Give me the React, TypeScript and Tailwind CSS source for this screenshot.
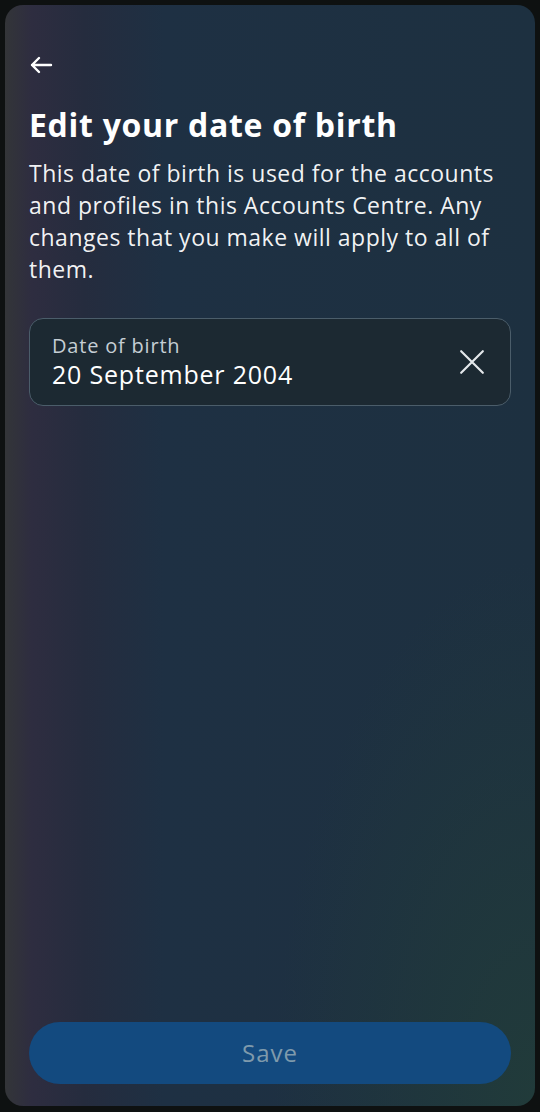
export default function App() {
  return (
    <div className="min-h-screen bg-[#0e1111] p-[5px]" style={{ fontFamily: "'Open Sans', 'Noto Sans', sans-serif" }}>
      <div className="h-[1101px] rounded-[18px] overflow-hidden flex flex-col bg-[radial-gradient(ellipse_at_100%_100%,#213b3a_0%,transparent_35%),linear-gradient(90deg,#333538_0%,#2e2d40_5%,#252c3e_15%,#1e3043_30%,#1d3040_100%)] px-[24px]">
        <button className="mt-[48px] w-[24px] h-[24px] text-white">
          <svg viewBox="0 0 24 24" className="w-[24px] h-[24px]" fill="none" stroke="currentColor" strokeWidth="2.4" strokeLinecap="round" strokeLinejoin="round">
            <path d="M22 12H3M10 5l-7 7 7 7" />
          </svg>
        </button>
        <h1 className="mt-[28px] text-[32px] leading-[40px] font-bold text-white tracking-[0.7px]">Edit your date of birth</h1>
        <p className="mt-[12px] text-[23px] leading-[32px] text-white/95 tracking-[0.5px]">
          This date of birth is used for the accounts and profiles in this Accounts Centre. Any changes that you make will apply to all of them.
        </p>
        <div className="mt-[33px] h-[88px] rounded-[14px] border border-[#4b5d6a] bg-[#1c2932] flex items-center pl-[22px] pr-[25px]">
          <div className="flex-1 flex flex-col">
            <span className="text-[20px] leading-[24px] text-[#c5ced4] tracking-[0.8px]">Date of birth</span>
            <span className="text-[25px] leading-[32px] font-medium text-white tracking-[0.8px]">20 September 2004</span>
          </div>
          <svg viewBox="0 0 24 24" className="w-[26px] h-[26px] text-[#e4e8eb]" fill="none" stroke="currentColor" strokeWidth="2" strokeLinecap="round">
            <path d="M2 2l20 20M22 2L2 22" />
          </svg>
        </div>
        <div className="flex-1" />
        <button className="mb-[22px] h-[62px] rounded-full bg-[#134a7f] text-[24px] font-medium text-[#7f9aac] tracking-[1px]">Save</button>
      </div>
    </div>
  );
}
